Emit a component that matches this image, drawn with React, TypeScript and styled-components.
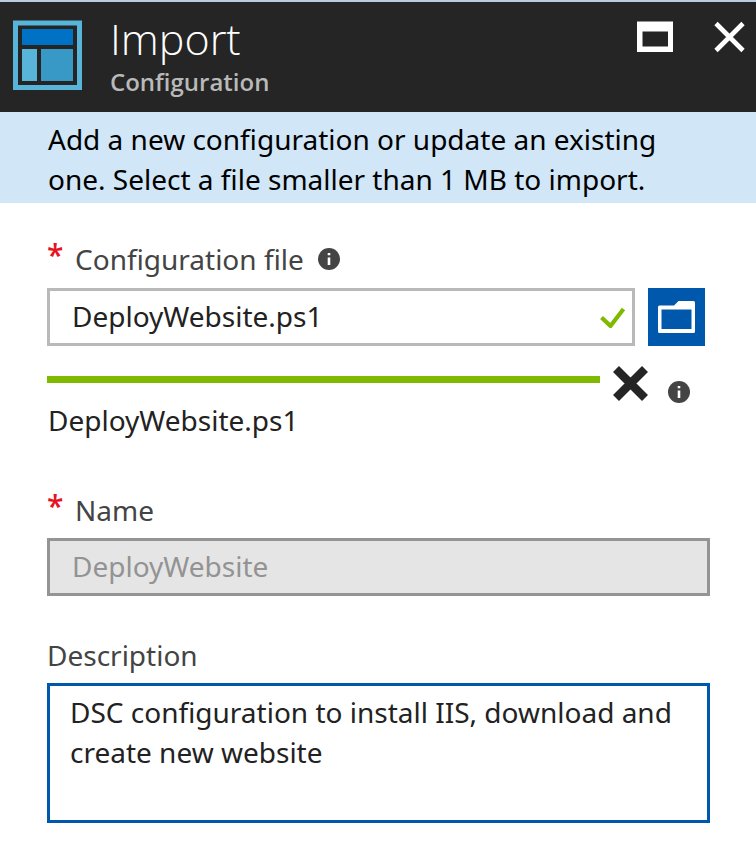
import React, { useState } from "react";
import styled, { createGlobalStyle, css } from "styled-components";

const GlobalStyle = createGlobalStyle`
  *, *::before, *::after { box-sizing: border-box; }
  body {
    margin: 0;
    background: #fff;
    color: #222;
    font-family: "Noto Sans", "Open Sans", sans-serif;
    font-size: 28px;
    line-height: 40px;
  }
  button, input, textarea { font: inherit; color: inherit; border-radius: 0; }
`;

const Blade = styled.main`
  border-top: 2px solid #bccbe0;
`;

const Header = styled.header`
  display: flex;
  align-items: flex-start;
  height: 110px;
  padding: 18px 11px 0 13px;
  background: #252525;
`;

const Titles = styled.div`
  flex: 1;
  margin-left: 28px;
  font-family: "Open Sans", sans-serif;
`;

const Title = styled.h1`
  margin: 0;
  color: #fff;
  font-size: 43px;
  font-weight: 300;
  line-height: 38px;
`;

const Subtitle = styled.p`
  margin: 0;
  color: #b9b9b9;
  font-size: 24px;
  font-weight: 600;
  line-height: 48px;
`;

const WindowButtons = styled.div`
  display: flex;
  gap: 41px;
`;

const IconButton = styled.button`
  display: flex;
  padding: 0;
  border: 0;
  background: none;
  cursor: pointer;
`;

const Notice = styled.p`
  margin: 0;
  padding: 7px 48px 4px;
  background: #d1e6f7;
  color: #000;
`;

const Form = styled.form`
  padding: 36px 46px 38px 47px;
`;

const Field = styled.div<{ $gap?: number }>`
  margin-top: ${(p) => p.$gap ?? 0}px;
`;

const LabelRow = styled.div<{ $gap?: number }>`
  display: flex;
  align-items: center;
  gap: 14px;
  margin-bottom: ${(p) => p.$gap ?? 8}px;
`;

const Label = styled.label`
  display: flex;
  align-items: flex-start;
  gap: 13px;
  color: #444;
`;

const Required = styled.span`
  width: 15px;
  color: #e81123;
  font-family: "Open Sans", sans-serif;
  font-size: 30px;
  font-weight: 600;
  line-height: 32px;
`;

const control = css`
  width: 100%;
  border: 3px solid #b9b9b9;
  background: #fff;
  outline: 0;
`;

const FileRow = styled.div`
  display: flex;
  gap: 13px;
  padding-right: 5px;
`;

const FileBox = styled.div`
  ${control}
  display: flex;
  align-items: center;
  flex: 1;
  height: 58px;
  padding: 0 6px 0 22px;
`;

const FileInput = styled.input`
  flex: 1;
  min-width: 0;
  height: 52px;
  padding: 0 0 2px;
  border: 0;
  outline: 0;
  background: none;
`;

const BrowseButton = styled.button`
  display: flex;
  align-items: center;
  justify-content: center;
  width: 57px;
  height: 58px;
  padding: 0;
  border: 0;
  background: #0058ad;
  cursor: pointer;
`;

const UploadRow = styled.div`
  display: flex;
  align-items: flex-start;
  height: 34px;
  margin-top: 20px;
  padding-right: 20px;
`;

const Track = styled.div`
  flex: 1;
  height: 7px;
  margin: 10px 13px 0 0;
`;

const Bar = styled.div`
  height: 100%;
  background: #7fba00;
`;

const InfoButton = styled(IconButton)`
  margin: 15px 0 0 20px;
`;

const FileName = styled.div`
  padding-left: 1px;
`;

const TextInput = styled.input`
  ${control}
  display: block;
  height: 58px;
  padding: 0 22px 2px;
  &:disabled {
    border-color: #949494;
    background: #e5e5e5;
    color: #939393;
  }
`;

const TextArea = styled.textarea`
  ${control}
  display: block;
  height: 140px;
  padding: 6px 20px;
  border-color: #0058ad;
  resize: none;
`;

const ConfigurationIcon = () => (
  <svg width="69" height="70" viewBox="0 0 69 70" aria-hidden="true">
    <rect x="2.5" y="3" width="64" height="64.5" fill="none" stroke="#59b4d9" strokeWidth="5" />
    <rect x="9" y="9" width="51" height="16" fill="#0072c6" />
    <rect x="9" y="29" width="15" height="32" fill="#59b4d9" />
    <rect x="28" y="29" width="32" height="32" fill="#3999c6" />
  </svg>
);

const MaximizeIcon = () => (
  <svg width="36" height="34" viewBox="0 0 36 34" aria-hidden="true">
    <path fill="#fff" fillRule="evenodd" d="M0 1.5h36v30.5H0zM5.5 11.5v15h25.5v-15z" />
  </svg>
);

const CloseIcon = () => (
  <svg width="31" height="34" viewBox="0 0 31 34" aria-hidden="true">
    <path d="M2 3.5 29 30.5M29 3.5 2 30.5" stroke="#fff" strokeWidth="4.6" />
  </svg>
);

const CheckIcon = () => (
  <svg width="26" height="22" viewBox="0 0 26 22" aria-hidden="true">
    <path d="M1.5 11.5 10.5 20 23.5 3" fill="none" stroke="#7fba00" strokeWidth="4.2" />
  </svg>
);

const FolderIcon = () => (
  <svg width="37" height="32" viewBox="0 0 37 32" aria-hidden="true">
    <path
      fill="#fff"
      fillRule="evenodd"
      d="M1.5 4.5H16L20.5 0H35.5Q37 0 37 1.5V30.5Q37 32 35.5 32H1.5Q0 32 0 30.5V6Q0 4.5 1.5 4.5zM3.5 8.5V28H33.5V8.5z"
    />
  </svg>
);

const CancelIcon = () => (
  <svg width="35" height="35" viewBox="0 0 35 35" aria-hidden="true">
    <path d="M3 3 32 32M32 3 3 32" stroke="#252525" strokeWidth="8.4" />
  </svg>
);

const InfoIcon = () => (
  <svg width="22" height="22" viewBox="0 0 22 22" aria-hidden="true">
    <circle cx="11" cy="11" r="11" fill="#444" />
    <path fill="#fff" d="M9.7 5h2.6v2.3H9.7zM9.7 9.5h2.6v7.5H9.7z" />
  </svg>
);

export default function App() {
  const [description, setDescription] = useState(
    "DSC configuration to install IIS, download and create new website"
  );
  const fileName = "DeployWebsite.ps1";
  const progress = 100;

  return (
    <>
      <GlobalStyle />
      <Blade>
        <Header>
          <ConfigurationIcon />
          <Titles>
            <Title>Import</Title>
            <Subtitle>Configuration</Subtitle>
          </Titles>
          <WindowButtons>
            <IconButton type="button" aria-label="Maximize"><MaximizeIcon /></IconButton>
            <IconButton type="button" aria-label="Close"><CloseIcon /></IconButton>
          </WindowButtons>
        </Header>
        <Notice>
          Add a new configuration or update an existing one. Select a file smaller than 1 MB to import.
        </Notice>
        <Form onSubmit={(e) => e.preventDefault()}>
          <Field>
            <LabelRow $gap={9}>
              <Label htmlFor="file"><Required>*</Required>Configuration file</Label>
              <IconButton type="button" aria-label="About the configuration file"><InfoIcon /></IconButton>
            </LabelRow>
            <FileRow>
              <FileBox>
                <FileInput id="file" type="text" value={fileName} readOnly />
                <CheckIcon />
              </FileBox>
              <BrowseButton type="button" aria-label="Browse"><FolderIcon /></BrowseButton>
            </FileRow>
            <UploadRow>
              <Track role="progressbar" aria-label="Upload" aria-valuenow={progress}>
                <Bar style={{ width: `${progress}%` }} />
              </Track>
              <IconButton type="button" aria-label="Cancel upload"><CancelIcon /></IconButton>
              <InfoButton type="button" aria-label="Upload details"><InfoIcon /></InfoButton>
            </UploadRow>
            <FileName>{fileName}</FileName>
          </Field>
          <Field $gap={50}>
            <LabelRow>
              <Label htmlFor="name"><Required>*</Required>Name</Label>
            </LabelRow>
            <TextInput id="name" type="text" value="DeployWebsite" disabled readOnly />
          </Field>
          <Field $gap={39}>
            <LabelRow>
              <Label htmlFor="description">Description</Label>
            </LabelRow>
            <TextArea
              id="description"
              value={description}
              onChange={(e) => setDescription(e.target.value)}
            />
          </Field>
        </Form>
      </Blade>
    </>
  );
}
